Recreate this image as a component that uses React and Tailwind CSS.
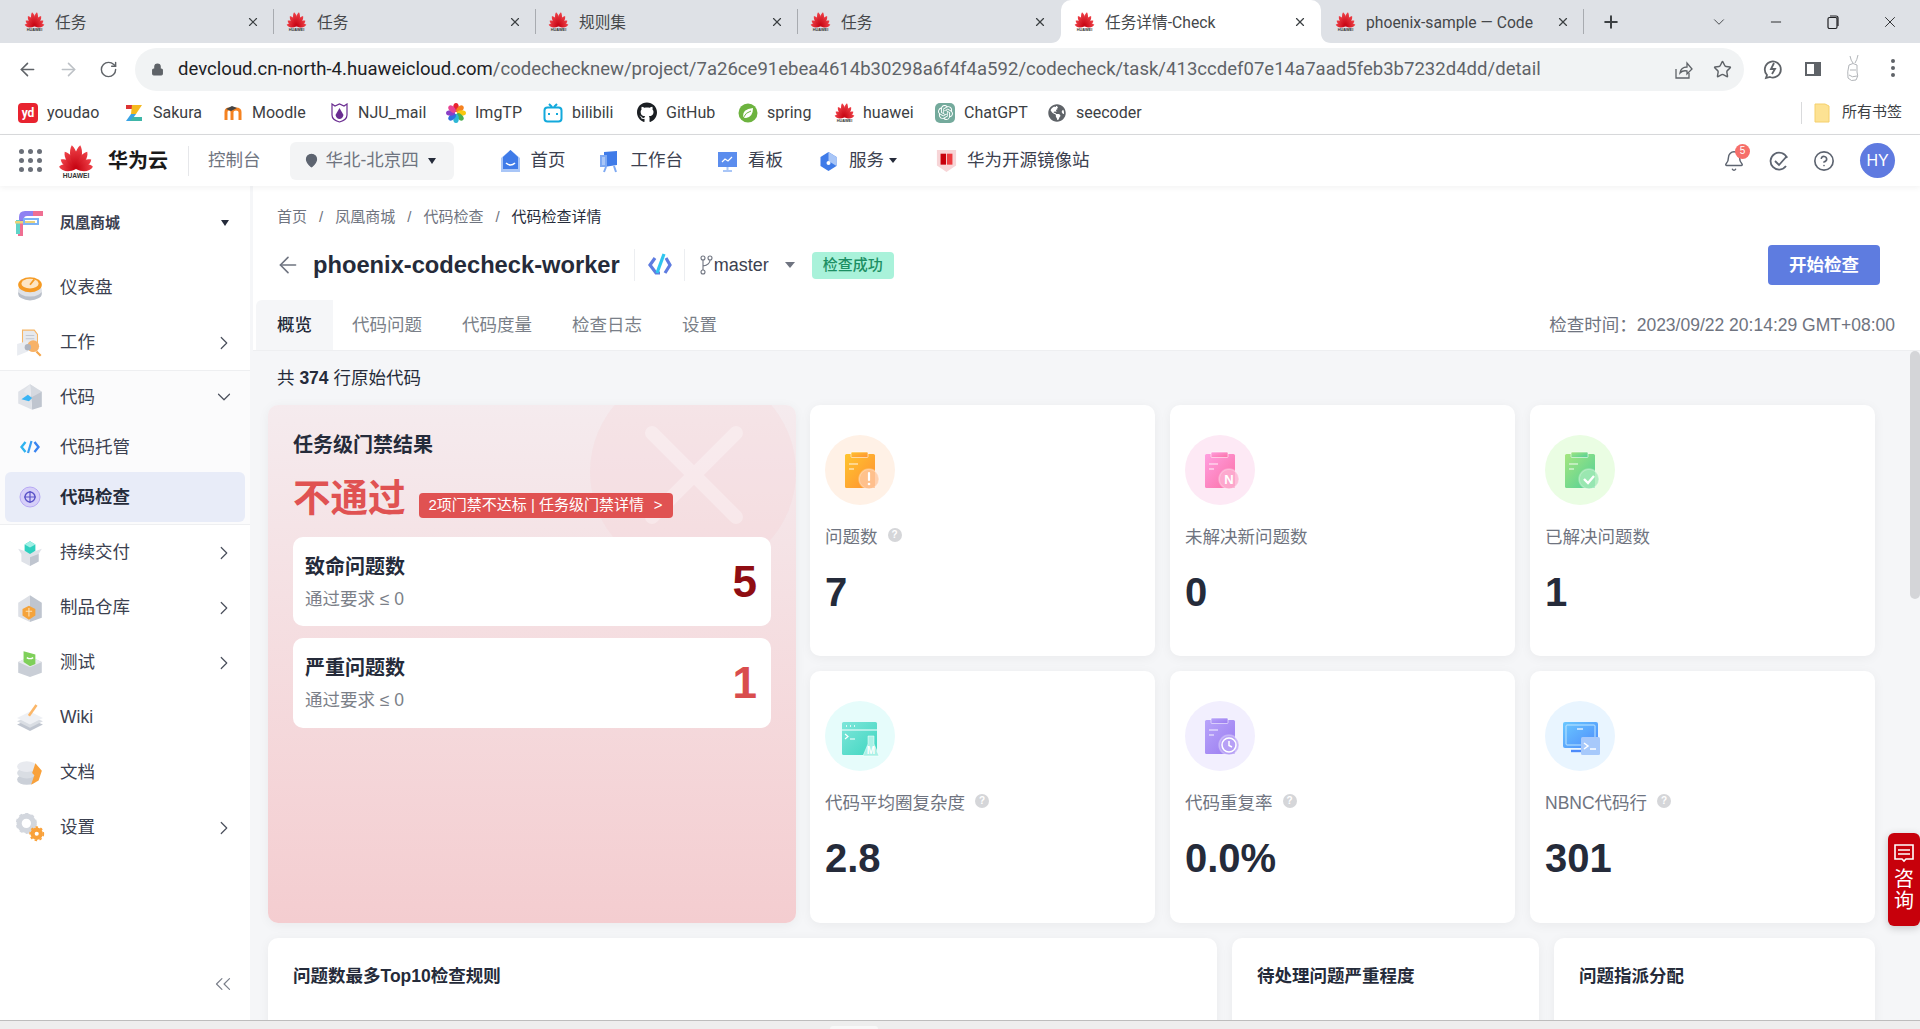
import React from "react";
import { ArrowLeft, ArrowRight, RotateCw, Lock, Star, ChevronDown, ChevronRight, Minus, X, Plus, Bell, CircleHelp, ChevronsLeft, MapPin } from "lucide-react";
import { FaGithub, FaGlobeAmericas } from "react-icons/fa";
import { SiOpenai } from "react-icons/si";

const Huawei = ({ size = 21, label = true }) => {
  const petals = [[-82, 19], [-58, 20], [-33, 23], [-10, 27], [10, 27], [33, 23], [58, 20], [82, 19]];
  return (
    <svg width={size} height={size} viewBox="0 0 40 40" className="shrink-0">
      <defs>
        <linearGradient id="hwg" x1="0" y1="0" x2="0" y2="1">
          <stop offset="0" stopColor="#f0434a" />
          <stop offset="1" stopColor="#c4000f" />
        </linearGradient>
      </defs>
      {petals.map(([a, l], i) => (
        <path key={i} transform={`translate(20 29) rotate(${a})`} d={`M0 0 C-5.500 ${-l * 0.4} -4.500 ${-l * 0.8} 0 ${-l} C4.500 ${-l * 0.8} 5.500 ${-l * 0.4} 0 0Z`} fill="url(#hwg)" />
      ))}
      {label && <text x="20" y="38.500" textAnchor="middle" fontSize="7.400" fontWeight="700" fontFamily="Liberation Sans" fill="#333">HUAWEI</text>}
    </svg>
  );
};

const ChromeTab = ({ title, narrow, active, sep = true, cls }) => (
  <div className={`relative flex h-[43px] items-center ${cls} ${active ? "rounded-t-[10px] bg-white" : ""}`}>
    <Huawei />
    <span className={`ml-[10px] translate-y-[1px] overflow-hidden whitespace-nowrap text-[15.700px] text-[#45474a] ${narrow ? "w-[178px]" : "w-[190px]"}`}>{title}</span>
    <X size={14} strokeWidth={2} className="absolute right-[14px] top-[15px] text-[#3c4043]" />
    {sep && <span className="absolute right-0 top-[9px] h-[25px] w-px bg-[#a8abb0]" />}
    {active && (
      <>
        <svg width="10" height="10" viewBox="0 0 10 10" className="absolute -left-[10px] bottom-0"><path d="M10 0V10H0C6 10 10 6 10 0Z" fill="#fff" /></svg>
        <svg width="10" height="10" viewBox="0 0 10 10" className="absolute -right-[10px] bottom-0"><path d="M0 0V10H10C4 10 0 6 0 0Z" fill="#fff" /></svg>
      </>
    )}
  </div>
);

const Bm = ({ icon, text, w }) => (
  <div className="flex items-center gap-[9px]">
    <span className="flex h-[20px] w-[20px] items-center justify-center">{icon}</span>
    <span className={`whitespace-nowrap text-[16px] text-[#3c4043] ${w}`}>{text}</span>
  </div>
);

const Q = () => (
  <span className="ml-[10px] flex h-[14px] w-[14px] -translate-y-[2px] items-center justify-center rounded-full bg-[#d5d6d9] text-[10px] font-bold leading-none text-white">?</span>
);

const Clip = ({ id, from, to, children, badge }) => (
  <svg width="70" height="70" viewBox="0 0 70 70">
    <defs>
      <linearGradient id={id} x1="0" y1="0" x2="1" y2="1">
        <stop offset="0" stopColor={from} />
        <stop offset="1" stopColor={to} />
      </linearGradient>
    </defs>
    <rect x="20" y="19" width="30" height="34" rx="1.500" fill={`url(#${id})`} />
    <rect x="26" y="17" width="17" height="5.500" rx="1" fill={`url(#${id})`} stroke="#fff" strokeOpacity=".55" strokeWidth="1" />
    <path d="M24 29h9M24 34h5" stroke="#fff" strokeWidth="1.200" strokeOpacity=".9" />
    <circle cx="44" cy="44" r="10" fill={badge} fillOpacity=".8" stroke="#fff" strokeOpacity=".3" strokeWidth="1.500" />
    {children}
  </svg>
);

const stats = [
  { label: "问题数", q: true, val: "7", bg: "bg-[#fff1e6]", icon: <Clip id="s1" from="#ffc52e" to="#ff8f33" badge="#ffc9a3"><path d="M44 38v7" stroke="#fff" strokeWidth="2.200" strokeLinecap="round" /><circle cx="44" cy="49" r="1.300" fill="#fff" /></Clip> },
  { label: "未解决新问题数", val: "0", bg: "bg-[#fde9f5]", icon: <Clip id="s2" from="#ff9fe0" to="#fb6fa5" badge="#fdb3d3"><text x="44" y="49" textAnchor="middle" fontSize="13" fontWeight="700" fontFamily="Liberation Sans" fill="#fff">N</text></Clip> },
  { label: "已解决问题数", val: "1", bg: "bg-[#eafde3]", icon: <Clip id="s3" from="#a5e67f" to="#4fcf98" badge="#a6ebb9"><path d="M39 44l4 4 6-7" stroke="#fff" strokeWidth="2.400" fill="none" /></Clip> },
  { label: "代码平均圈复杂度", q: true, val: "2.8", bg: "bg-[#e6fcfb]", icon: (
    <svg width="70" height="70" viewBox="0 0 70 70">
      <defs><linearGradient id="s4" x1="0" y1="0" x2="1" y2="1"><stop offset="0" stopColor="#7fe6da" /><stop offset="1" stopColor="#3ed6c0" /></linearGradient></defs>
      <rect x="17" y="21" width="35" height="33" rx="1.500" fill="url(#s4)" />
      <path d="M17 29h35" stroke="#fff" strokeWidth="1" />
      <path d="M21 25h1M25 25h1M29 25h1" stroke="#fff" strokeWidth="1.600" />
      <path d="M20 33l3 2.500-3 2.500M25 38h5" stroke="#fff" strokeWidth="1.200" fill="none" />
      <path d="M38 55l5-12v-8h6v8l5 12z" fill="#a9f0e5" stroke="#fff" strokeOpacity=".5" />
      <text x="46" y="53" textAnchor="middle" fontSize="10" fontWeight="700" fontFamily="Liberation Sans" fill="#fff">M</text>
    </svg>
  ) },
  { label: "代码重复率", q: true, val: "0.0%", bg: "bg-[#f2effe]", icon: <Clip id="s5" from="#b8a4fa" to="#9a7bf0" badge="#bba6f6"><circle cx="44" cy="44" r="7" fill="none" stroke="#fff" strokeWidth="1.500" /><path d="M44 40v4.500l3 1.500" stroke="#fff" strokeWidth="1.500" fill="none" /></Clip> },
  { label: "NBNC代码行", q: true, val: "301", bg: "bg-[#e9f5ff]", icon: (
    <svg width="70" height="70" viewBox="0 0 70 70">
      <defs><linearGradient id="s6" x1="0" y1="0" x2="1" y2="1"><stop offset="0" stopColor="#6ac7ff" /><stop offset="1" stopColor="#4d8bfb" /></linearGradient></defs>
      <rect x="18" y="21" width="35" height="26" rx="2" fill="url(#s6)" />
      <rect x="21" y="24" width="29" height="20" rx="1" fill="none" stroke="#bde6ff" strokeWidth="1" />
      <path d="M32 28h6" stroke="#fff" strokeWidth="1.200" />
      <path d="M26 50h16" stroke="#4d8bfb" strokeWidth="2.400" />
      <rect x="36" y="36" width="19" height="18" rx="1.500" fill="#a7c9fb" />
      <path d="M39 42l4 3-4 3M45 48h6" stroke="#fff" strokeWidth="1.500" fill="none" />
    </svg>
  ) },
];

const Side = {
  dash: <svg width="28" height="28" viewBox="0 0 26 26"><ellipse cx="13" cy="18" rx="11" ry="6.500" fill="#b9bfc9" /><ellipse cx="13" cy="15" rx="11" ry="6" fill="#dfe2e7" /><ellipse cx="13" cy="10" rx="11" ry="7" fill="#f59a23" /><ellipse cx="13" cy="9" rx="8" ry="4.500" fill="#fde6c4" /><path d="M13 10l4-5" stroke="#f59a23" strokeWidth="1.600" /></svg>,
  work: <svg width="28" height="30" viewBox="0 0 26 28"><path d="M6 2h11l3 4v12H6z" fill="#e6e9ee" stroke="#f5b567" /><path d="M9 7h8M9 10h8" stroke="#c3c8d1" /><path d="M1 15l10-3v10l-10 4z" fill="#e9ecf1" /><circle cx="16" cy="17" r="5.500" fill="#f7b267" /><circle cx="11" cy="18" r="3" fill="#aeb4bf" /><path d="M19 22l4 4" stroke="#f5a54a" strokeWidth="2" /></svg>,
  code: <svg width="28" height="30" viewBox="0 0 26 28"><path d="M13 2L24 9v14l-9 3z" fill="#bfc5cf" /><path d="M13 2L2 9v11l13 6z" fill="#dfe2e8" /><path d="M13 2L24 9l-9 5-8-5z" fill="#eceef2" opacity=".5" /><path d="M5 16l6-4 4 3-3 3z" fill="#39b4f5" /></svg>,
  repo: <svg width="20" height="14" viewBox="0 0 20 14"><path d="M5.500 2L1.500 7l4 5" stroke="#2fb4ef" strokeWidth="2.400" fill="none" /><path d="M14.500 2l4 5-4 5" stroke="#3a84f0" strokeWidth="2.400" fill="none" /><path d="M11.500 1L8 13" stroke="#3a9df0" strokeWidth="2.200" /></svg>,
  check: <svg width="22" height="22" viewBox="0 0 22 22"><circle cx="11" cy="11" r="10" fill="#d6cff8" stroke="#b7a9f4" /><circle cx="11" cy="11" r="5" fill="none" stroke="#5a53c8" strokeWidth="1.400" /><path d="M11 5v12M5 11h12" stroke="#5a53c8" strokeWidth="1.200" /></svg>,
  cd: <svg width="28" height="28" viewBox="0 0 26 26"><path d="M13 13l11-4-3 5v7l-8 4-8-4v-7L2 9z" fill="#dfe2e8" /><path d="M13 17v8l8-4v-7z" fill="#bfc5cf" /><path d="M8 5l5-3 5 3v6l-5 3-5-3z" fill="#2ed0bf" /><path d="M8 5l5 3 5-3-5-3z" fill="#9ff0e5" /></svg>,
  art: <svg width="28" height="30" viewBox="0 0 26 28"><path d="M13 2L24 9v14l-11 4z" fill="#bfc5cf" /><path d="M13 2L2 9v13l11 5z" fill="#dde0e6" /><path d="M6 15l6-3 6 3v6l-6 4-6-4z" fill="#f5a33b" /><path d="M9 17h6M12 14v8" stroke="#fde3b8" /></svg>,
  test: <svg width="28" height="30" viewBox="0 0 26 28"><path d="M2 13l11-5 11 5v10l-11 4-11-4z" fill="#c9ced6" /><path d="M2 13l11 5 11-5-11-5z" fill="#e9ebef" /><path d="M7 3l11 3v9l-5 2-6-4z" fill="#7fd05a" /><path d="M10 9q3 2 6 0" stroke="#fff" strokeWidth="1.200" fill="none" /></svg>,
  wiki: <svg width="28" height="28" viewBox="0 0 26 26"><path d="M1 19l12 6 12-6-12-5z" fill="#bfc5cf" /><path d="M1 16l12 6 12-6-12-5z" fill="#d9dde3" /><path d="M1 13l12 6 12-6-12-6z" fill="#eef0f4" /><path d="M12 11L19 1" stroke="#fbb668" strokeWidth="2.400" /></svg>,
  doc: <svg width="28" height="28" viewBox="0 0 26 26"><ellipse cx="10" cy="19" rx="9" ry="5" fill="#cbd0d8" /><ellipse cx="10" cy="13" rx="9" ry="5" fill="#d9dde3" /><ellipse cx="10" cy="7" rx="9" ry="5" fill="#e8eaef" /><path d="M18 4l6 7-3 9-7 4 3-9-2-2z" fill="#f9a13a" /></svg>,
  set: <svg width="29" height="29" viewBox="0 0 28 28"><circle cx="10" cy="10" r="7" fill="none" stroke="#d3d7de" strokeWidth="5" /><circle cx="10" cy="10" r="9.200" fill="none" stroke="#d3d7de" strokeWidth="2" strokeDasharray="3 3" /><circle cx="20" cy="20" r="4" fill="none" stroke="#f9a13a" strokeWidth="4" /><circle cx="20" cy="20" r="6.400" fill="none" stroke="#f9a13a" strokeWidth="1.600" strokeDasharray="2.400 2.400" /></svg>,
};

const Row = ({ icon, text, chev, h = "h-[55px]", open }) => (
  <div className={`flex items-center pr-[15px] ${h}`}>
    <span className="flex w-[60px] justify-center"><span className="flex w-[30px] justify-center">{icon}</span></span>
    <span className="text-[17.500px] text-[#3c4150]">{text}</span>
    {chev && (open
      ? <ChevronDown size={22} strokeWidth={1.300} className="ml-auto text-[#4a4f5c]" />
      : <ChevronRight size={22} strokeWidth={1.300} className="ml-auto text-[#4a4f5c]" />)}
  </div>
);

const Card = ({ title, w }) => (
  <div className={`h-[200px] rounded-[10px] bg-white pl-[25px] pt-[24px] shadow-[0_2px_12px_rgba(0,0,0,0.05)] ${w}`}>
    <div className="text-[17.500px] font-bold leading-[28px] text-[#252b3a]">{title}</div>
  </div>
);

const Gate = ({ title, val, color, cls }) => (
  <div className={`flex items-center justify-between rounded-[10px] bg-white pl-[12px] pr-[14px] ${cls}`}>
    <div>
      <div className="text-[20px] font-bold leading-[28px] text-[#252b3a]">{title}</div>
      <div className="mt-[6px] text-[17.500px] leading-[24px] text-[#7b7f88]">通过要求 ≤ 0</div>
    </div>
    <div className={`text-[44px] font-bold leading-none ${color}`}>{val}</div>
  </div>
);

const NavIcon = {
  home: <svg width="21" height="24" viewBox="0 0 21 24"><path d="M10.500 1L20 9v14H1V9z" fill="#a9c6f7" /><path d="M10.500 1L3 8v12h15V8z" fill="#3f7be8" /><path d="M6 14q4.500 4 9 0" stroke="#fff" strokeWidth="1.600" fill="none" /></svg>,
  board: <svg width="21" height="24" viewBox="0 0 21 24"><path d="M4 3l13-1v14l-13 2z" fill="#3f7be8" /><path d="M1 7h5v10H1zM6 18l-2 5M14 17l2 6" stroke="#7ea9f2" strokeWidth="2" fill="#a9c6f7" /></svg>,
  kanban: <svg width="21" height="24" viewBox="0 0 21 24"><rect x="1" y="3" width="19" height="15" fill="#5b8dee" /><path d="M5 13l3-3 3 2 4-4" stroke="#fff" strokeWidth="1.200" fill="none" /><path d="M10.500 18v3M6 22h9" stroke="#a9c6f7" strokeWidth="2" /></svg>,
  serv: <svg width="19" height="24" viewBox="0 0 19 24"><path d="M9.500 3l8 5v9l-8 5-8-5V8z" fill="#3f7be8" /><path d="M9.500 3l8 5v9l-8-5z" fill="#a9c6f7" /><circle cx="9.500" cy="14" r="2" fill="#fff" /></svg>,
  mirror: <svg width="23" height="26" viewBox="0 0 23 26"><path d="M1 1h21v17l-10.500 7L1 18z" fill="#f7d5d7" /><path d="M5 5h6v12H5z" fill="#c7000b" /><path d="M12 5h6v12h-6z" fill="#ee3b40" /></svg>,
};

const Nav = ({ icon, text, cls, caret }) => (
  <div className={`flex items-center ${cls}`}>
    <span className="flex w-[21px] justify-center">{icon}</span>
    <span className="ml-[10px] whitespace-nowrap text-[17.500px] text-[#3c4150]">{text}</span>
    {caret && <span className="ml-[5px] h-0 w-0 border-x-[4px] border-t-[5px] border-x-transparent border-t-[#252b3a]" />}
  </div>
);

export default function App() {
  return (
    <div className="flex h-[1029px] w-[1920px] flex-col overflow-hidden bg-white font-['Liberation_Sans','Noto_Sans_CJK_SC',sans-serif]">
      {/* tab strip */}
      <div className="flex h-[43px] shrink-0 items-center bg-[#dee1e6] pl-[12px] font-[Roboto,'Noto_Sans_CJK_SC',sans-serif]">
        <ChromeTab title="任务" cls="w-[262px] pl-[12px]" />
        <ChromeTab title="任务" cls="w-[262px] pl-[12px]" />
        <ChromeTab title="规则集" cls="w-[262px] pl-[12px]" />
        <ChromeTab title="任务" cls="w-[263px] pl-[12px]" sep={false} />
        <ChromeTab title="任务详情-Check" cls="w-[260px] pl-[13px]" active sep={false} />
        <ChromeTab title="phoenix-sample — Code" cls="w-[263px] pl-[14px]" narrow />
        <Plus size={20} strokeWidth={2.400} className="ml-[17px] text-[#3c4043]" />
        <ChevronDown size={18} strokeWidth={1.200} className="ml-[89px] text-[#3c4043]" />
        <Minus size={16} strokeWidth={1.400} className="ml-[40px] text-[#202124]" />
        <svg width="14" height="16" viewBox="0 0 14 16" className="ml-[42px]"><rect x="2" y="3.500" width="9" height="11" rx="1.500" fill="none" stroke="#202124" strokeWidth="1.200" /><path d="M4 2h6q2 0 2 2v8" fill="none" stroke="#202124" strokeWidth="1.200" /></svg>
        <X size={18} strokeWidth={1.200} className="ml-[41px] text-[#202124]" />
      </div>
      {/* toolbar */}
      <div className="flex h-[48px] shrink-0 items-start bg-white pl-[17px] pt-[5px] font-[Roboto,'Noto_Sans_CJK_SC',sans-serif]">
        <ArrowLeft size={21} strokeWidth={1.800} className="mt-[11px] text-[#5f6368]" />
        <ArrowRight size={21} strokeWidth={1.800} className="ml-[20px] mt-[11px] text-[#bdc1c6]" />
        <RotateCw size={19} strokeWidth={1.800} className="ml-[20px] mt-[12px] text-[#5f6368]" />
        <div className="ml-[17px] flex h-[43px] w-[1609px] items-center rounded-full bg-[#f1f3f4] pl-[16px] pr-[12px]">
          <Lock size={13} fill="#5f6368" strokeWidth={2} className="text-[#5f6368]" />
          <span className="ml-[14px] whitespace-nowrap text-[18.500px] tracking-[0.03px] text-[#5f6368]">
            <span className="text-[#202124]">devcloud.cn-north-4.huaweicloud.com</span>/codechecknew/project/7a26ce91ebea4614b30298a6f4f4a592/codecheck/task/413ccdef07e14a7aad5feb3b7232d4dd/detail
          </span>
          <svg width="20" height="20" viewBox="0 0 20 20" className="ml-auto" fill="none" stroke="#5f6368" strokeWidth="1.300"><path d="M3 9v9h13v-5" /><path d="M7 13q1-6 7-6V3l5 6-5 5v-3q-4-1-7 2z" /></svg>
          <Star size={19} strokeWidth={1.800} className="ml-[20px] text-[#5f6368]" />
        </div>
        <svg width="20" height="22" viewBox="0 0 20 22" className="ml-[19px] mt-[10px]" fill="none" stroke="#5f6368" strokeWidth="1.800"><path d="M4 17a8 8 0 1 1 3 2l-4 1z" /><path d="M11 5l-3 6h4l-3 5" /></svg>
        <svg width="18" height="18" viewBox="0 0 18 18" className="ml-[21px] mt-[12px]"><rect x="1" y="2" width="16" height="14" fill="#5f6368" /><rect x="3" y="4" width="7" height="10" fill="#fff" /></svg>
        <svg width="18" height="30" viewBox="0 0 18 30" className="ml-[22px] mt-[6px]" fill="none" stroke="#a8abb0" strokeWidth=".9"><path d="M6 2q1 5 3 7M14 1q-1 5-3 8M5 11q4-3 8 0v7q2 4-1 8q-5 2-8-2q-1-6 1-13zM6 16h6M5 21q3 3 8 1" /></svg>
        <div className="ml-[29px] mt-[11px] flex flex-col gap-[3px]">
          <span className="h-[4px] w-[4px] rounded-full bg-[#5f6368]" /><span className="h-[4px] w-[4px] rounded-full bg-[#5f6368]" /><span className="h-[4px] w-[4px] rounded-full bg-[#5f6368]" />
        </div>
      </div>
      {/* bookmarks */}
      <div className="flex h-[44px] shrink-0 items-center gap-[22px] border-b border-[#d9dadc] pl-[18px] font-[Roboto,'Noto_Sans_CJK_SC',sans-serif]">
        <Bm w="w-[55px]" text="youdao" icon={<span className="flex h-[20px] w-[20px] items-center justify-center rounded-[4px] bg-[#e8232f] text-[12px] font-bold leading-none text-white">yd</span>} />
        <Bm w="w-[48px]" text="Sakura" icon={<svg width="20" height="20" viewBox="0 0 20 20"><path d="M2 2h6v4H2z" fill="#d33" /><path d="M8 2h10L12 11H7z" fill="#f5b91f" /><path d="M7 11h5l-5 7H2z" fill="#3aa3e3" /><path d="M9 14h9v4H6z" fill="#3fb6a8" /></svg>} />
        <Bm w="w-[55px]" text="Moodle" icon={<svg width="20" height="20" viewBox="0 0 20 20"><path d="M3 17V9q0-3 3-3t3 3v8M9 9q0-3 4-3t4 3v8" fill="none" stroke="#f58220" strokeWidth="3" /><path d="M3 6l6-3 5 2-6 3z" fill="#444" /></svg>} />
        <Bm w="w-[66px]" text="NJU_mail" icon={<svg width="17" height="20" viewBox="0 0 17 20"><path d="M1 1l3 2 4.500-2 4.500 2 3-2v11q0 5-7.500 7Q1 17 1 12z" fill="#fff" stroke="#6a2c91" strokeWidth="1.200" /><path d="M8.500 5l4 7q-1 4-4 4t-4-4z" fill="#6a2c91" /></svg>} />
        <Bm w="w-[46px]" text="ImgTP" icon={<svg width="20" height="20" viewBox="-10 -10 20 20">{["#e8232f", "#f58220", "#f9c80e", "#4caf50", "#2db7d5", "#2f6fde", "#8a3fc7", "#e84393"].map((c, i) => <ellipse key={i} transform={`rotate(${i * 45}) translate(0 -5.500)`} rx="2.800" ry="4.500" fill={c} />)}</svg>} />
        <Bm w="w-[43px]" text="bilibili" icon={<svg width="20" height="20" viewBox="0 0 20 20"><rect x="1.500" y="4.500" width="17" height="14" rx="3" fill="none" stroke="#13a9dc" strokeWidth="2" /><path d="M6 1l3 3M14 1l-3 3" stroke="#13a9dc" strokeWidth="2" /><path d="M6 10v2M14 10v2" stroke="#13a9dc" strokeWidth="2" /></svg>} />
        <Bm w="w-[50px]" text="GitHub" icon={<FaGithub size={21} color="#1b1f23" />} />
        <Bm w="w-[45px]" text="spring" icon={<svg width="20" height="20" viewBox="0 0 20 20"><circle cx="10" cy="10" r="9.500" fill="#6db33f" /><path d="M5 14q-1-8 10-9 0 9-7 10-2 0-3-1z" fill="#fff" /><path d="M5 15q3-6 8-7" stroke="#6db33f" fill="none" /></svg>} />
        <Bm w="w-[50px]" text="huawei" icon={<Huawei size={21} />} />
        <Bm w="w-[61px]" text="ChatGPT" icon={<span className="flex h-[20px] w-[20px] items-center justify-center rounded-[5px] bg-[#74aa9c]"><SiOpenai size={15} color="#fff" /></span>} />
        <Bm w="w-[66px]" text="seecoder" icon={<FaGlobeAmericas size={18} color="#5f6368" />} />
        <span className="ml-[637px] h-[22px] w-px bg-[#d9dadc]" />
        <svg width="16" height="20" viewBox="0 0 16 20" className="-ml-[10px]"><path d="M1 1h10l4 2v16H1z" fill="#fde293" stroke="#f5d06c" /></svg>
        <span className="-ml-[10px] whitespace-nowrap text-[15px] text-[#3c4043]">所有书签</span>
      </div>
      {/* app header */}
      <div className="relative z-10 flex h-[51px] shrink-0 items-center bg-white shadow-[0_2px_6px_rgba(0,0,0,0.05)]">
        <div className="ml-[19px] grid grid-cols-3 gap-[4px]">
          {[0, 1, 2, 3, 4, 5, 6, 7, 8].map((i) => <span key={i} className="h-[5px] w-[5px] rounded-full bg-[#6a6f78]" />)}
        </div>
        <span className="ml-[16px]"><Huawei size={36} /></span>
        <span className="ml-[14px] text-[20px] font-bold text-[#1a1a1a]">华为云</span>
        <span className="ml-[20px] h-[30px] w-px bg-[#e6e7ea]" />
        <span className="ml-[19px] text-[17.500px] text-[#6f7480]">控制台</span>
        <div className="ml-[29px] flex h-[38px] w-[164px] items-center rounded-[6px] bg-[#f3f4f5] pl-[14px]">
          <MapPin size={15} fill="#5d6470" strokeWidth={2} color="#5d6470" />
          <span className="ml-[7px] text-[17.500px] text-[#6f7480]">华北-北京四</span>
          <span className="ml-[9px] h-0 w-0 border-x-[4.500px] border-t-[6px] border-x-transparent border-t-[#252b3a]" />
        </div>
        <Nav icon={NavIcon.home} text="首页" cls="ml-[46px]" />
        <Nav icon={NavIcon.board} text="工作台" cls="ml-[34px]" />
        <Nav icon={NavIcon.kanban} text="看板" cls="ml-[34px]" />
        <Nav icon={NavIcon.serv} text="服务" cls="ml-[35px]" caret />
        <Nav icon={NavIcon.mirror} text="华为开源镜像站" cls="ml-[39px]" />
        <div className="relative ml-auto">
          <Bell size={22} strokeWidth={1.600} className="text-[#5d6470]" />
          <span className="absolute -right-[5px] -top-[6px] flex h-[15px] w-[15px] items-center justify-center rounded-full bg-[#f66f6a] text-[10px] leading-none text-white">5</span>
        </div>
        <svg width="22" height="22" viewBox="0 0 22 22" className="ml-[23px]" fill="none" stroke="#5d6470" strokeWidth="1.800"><path d="M19 8a8.500 8.500 0 1 0-1 8" /><path d="M7 11l4 4 8-9" /></svg>
        <CircleHelp size={22} strokeWidth={1.800} className="ml-[23px] text-[#5d6470]" />
        <span className="ml-[25px] mr-[25px] flex h-[35px] w-[35px] items-center justify-center rounded-full bg-[#5f7ae0] text-[16px] text-white">HY</span>
      </div>
      {/* main */}
      <div className="flex min-h-0 flex-1">
        <aside className="flex w-[250px] shrink-0 flex-col bg-white">
          <div className="flex h-[74px] items-center pr-[21px]">
            <svg width="30" height="30" viewBox="0 0 30 30" className="ml-[15px]">
              <rect x="3" y="12" width="5" height="16" fill="#ef6f92" /><path d="M4 15V9q0-6 6-6h18v5H12q-3 0-3 3v4z" fill="#7a6cf0" fillOpacity=".85" />
              <path d="M18 3h10v5H18z" fill="#ef6f92" /><rect x="1" y="12" width="4" height="14" fill="#60d3c8" /><rect x="0" y="13" width="20" height="2.500" fill="#e9d27a" /><path d="M9 11h14v5H9z" fill="none" stroke="#7cb3f5" strokeWidth="2" />
            </svg>
            <span className="ml-[15px] text-[15px] font-bold text-[#3c4150]">凤凰商城</span>
            <span className="ml-auto h-0 w-0 border-x-[4.500px] border-t-[6px] border-x-transparent border-t-[#252b3a]" />
          </div>
          <Row icon={Side.dash} text="仪表盘" />
          <Row icon={Side.work} text="工作" chev />
          <div className="border-y border-[#eeeff1] bg-[#fbfbfc] pb-[2px] pt-[1px]">
            <Row icon={Side.code} text="代码" chev open h="h-[50px]" />
            <Row icon={Side.repo} text="代码托管" h="h-[50px]" />
            <div className="mx-[5px] flex h-[50px] items-center rounded-[6px] bg-[#e8ecf8]">
              <span className="flex w-[50px] justify-center">{Side.check}</span>
              <span className="ml-[5px] text-[17.500px] font-bold text-[#252b3a]">代码检查</span>
            </div>
          </div>
          <Row icon={Side.cd} text="持续交付" chev />
          <Row icon={Side.art} text="制品仓库" chev />
          <Row icon={Side.test} text="测试" chev />
          <Row icon={Side.wiki} text="Wiki" />
          <Row icon={Side.doc} text="文档" />
          <Row icon={Side.set} text="设置" chev />
          <div className="mt-auto flex justify-end pb-[23px] pr-[14px]">
            <ChevronsLeft size={26} strokeWidth={1.100} className="text-[#7a7f8a]" />
          </div>
        </aside>
        <main className="relative flex min-w-0 flex-1 flex-col bg-[#f5f6f8] pl-[3px]">
          <div className="h-[114px] shrink-0 bg-white pl-[24px] pt-[21px]">
            <div className="flex h-[20px] items-center text-[15px] text-[#6f7480]">
              <span>首页</span><span className="mx-[12px]">/</span>
              <span>凤凰商城</span><span className="mx-[12px]">/</span>
              <span>代码检查</span><span className="mx-[12px]">/</span>
              <span className="text-[#252b3a]">代码检查详情</span>
            </div>
            <div className="mt-[18px] flex h-[40px] items-center">
              <ArrowLeft size={26} strokeWidth={1.500} className="-ml-[2px] text-[#6f7480]" />
              <span className="ml-[12px] translate-y-[1px] text-[23.700px] font-bold text-[#252b3a]">phoenix-codecheck-worker</span>
              <span className="ml-[14px] h-[32px] w-px bg-[#eceef1]" />
              <svg width="24" height="24" viewBox="0 0 24 24" className="ml-[13px]" fill="none" strokeWidth="3.200"><path d="M7 5L2 12l6 8h4" stroke="#5e7ce0" /><path d="M18 5l4 7-5 8" stroke="#5e7ce0" /><path d="M16 1L9 20" stroke="#2fc6ef" /></svg>
              <span className="ml-[12px] h-[32px] w-px bg-[#eceef1]" />
              <svg width="13" height="20" viewBox="0 0 13 20" className="ml-[15px]" fill="none" stroke="#6f7480" strokeWidth="1.100"><circle cx="3" cy="3" r="2" /><circle cx="10" cy="3" r="2" /><circle cx="3" cy="17" r="2" /><path d="M3 5v10M10 5q0 5-7 6" /></svg>
              <span className="ml-[1px] text-[18px] text-[#3c4150]">master</span>
              <span className="ml-[16px] h-0 w-0 border-x-[5px] border-t-[6px] border-x-transparent border-t-[#6f7480]" />
              <span className="ml-[17px] flex h-[27px] w-[82px] items-center justify-center rounded-[4px] bg-[#a9f2da] text-[15px] font-medium text-[#1c8f63]">检查成功</span>
              <button className="ml-auto mr-[40px] h-[40px] w-[112px] rounded-[4px] bg-[#5e7ce0] text-[17.500px] font-bold text-white">开始检查</button>
            </div>
          </div>
          <div className="flex h-[51px] shrink-0 items-start border-b border-[#eeeff1] bg-white pl-[3px]">
            <div className="flex h-[50px] w-[77px] items-center justify-center rounded-tl-[6px] bg-[#f5f6f8] text-[17.500px] font-medium text-[#252b3a]">概览</div>
            <div className="ml-[19px] flex h-[50px] items-center gap-[40px] text-[17.500px] text-[#7a7f88]">
              <span>代码问题</span><span>代码度量</span><span>检查日志</span><span>设置</span>
            </div>
            <div className="ml-auto mr-[25px] flex h-[50px] items-center text-[17.500px] text-[#6f7480]">检查时间：2023/09/22 20:14:29 GMT+08:00</div>
          </div>
          <div className="min-h-0 flex-1 overflow-hidden pl-[15px]">
            <div className="flex h-[54px] items-center pl-[9px] text-[17.500px] text-[#252b3a]">共&nbsp;<b>374</b>&nbsp;行原始代码</div>
            <div className="flex gap-[14px]">
              <div className="relative h-[518px] w-[528px] overflow-hidden rounded-[10px] bg-gradient-to-b from-[#f5ebee] to-[#f4cdd0] px-[25px] pt-[26px] shadow-[0_2px_12px_rgba(0,0,0,0.05)]">
                <div className="absolute left-[322px] top-[-36px] h-[206px] w-[206px] rounded-full bg-[#f3c9ce]/20" />
                <svg width="100" height="100" viewBox="0 0 100 100" className="absolute left-[376px] top-[20px]"><path d="M8 8L92 92M92 8L8 92" stroke="#fff" strokeOpacity=".3" strokeWidth="14" strokeLinecap="round" /></svg>
                <div className="relative text-[20px] font-bold leading-[28px] text-[#252b3a]">任务级门禁结果</div>
                <div className="relative mt-[14px] flex h-[50px] items-end">
                  <span className="self-center text-[37.500px] font-bold leading-[50px] text-[#e05252]">不通过</span>
                  <span className="mb-[5px] ml-[13px] flex h-[25px] w-[254px] items-center justify-between whitespace-nowrap rounded-[4px] bg-[#e05252] pl-[10px] pr-[10px] text-[15px] text-white"><span>2项门禁不达标 | 任务级门禁详情</span><span>&gt;</span></span>
                </div>
                <Gate title="致命问题数" val="5" color="text-[#8f0d12]" cls="relative mt-[14px] h-[89px]" />
                <Gate title="严重问题数" val="1" color="text-[#d94d4d]" cls="relative mt-[12px] h-[90px]" />
              </div>
              <div className="grid w-[1065px] grid-cols-3 grid-rows-[251px_252px] gap-[15px]">
                {stats.map((s) => (
                  <div key={s.label} className="rounded-[10px] bg-white pl-[15px] pt-[30px] shadow-[0_2px_12px_rgba(0,0,0,0.05)]">
                    <div className={`h-[70px] w-[70px] rounded-full ${s.bg}`}>{s.icon}</div>
                    <div className="mt-[18px] flex h-[28px] items-center text-[17.500px] text-[#6f7480]">{s.label}{s.q && <Q />}</div>
                    <div className="mt-[16px] text-[40px] font-bold leading-[50px] text-[#252b3a]">{s.val}</div>
                  </div>
                ))}
              </div>
            </div>
            <div className="mt-[15px] flex gap-[15px]">
              <Card title="问题数最多Top10检查规则" w="w-[949px]" />
              <Card title="待处理问题严重程度" w="w-[307px]" />
              <Card title="问题指派分配" w="w-[321px]" />
            </div>
          </div>
          <div className="absolute right-0 top-[165px] h-[248px] w-[10px] rounded-full bg-[#d4d5d8]" />
          <div className="absolute right-0 top-[647px] flex h-[93px] w-[32px] flex-col items-center rounded-[6px] bg-[#c7000b] pt-[10px] text-[20px] leading-[22px] text-white shadow-[0_2px_8px_rgba(0,0,0,0.2)]">
            <svg width="22" height="20" viewBox="0 0 22 20" fill="none" stroke="#fff" strokeWidth="1.600"><path d="M2 2h18v14h-7l-2 2-2-2H2z" /><path d="M5 7h12M5 11h12" /></svg>
            <span className="mt-[5px]">咨</span>
            <span>询</span>
          </div>
        </main>
      </div>
      {/* bottom bar */}
      <div className="flex h-[9px] shrink-0 items-end border-t border-[#bdbdbd] bg-[#eeeeee] pl-[830px]">
        <span className="h-[3px] w-[48px] rounded-t-[3px] bg-[#f8f8f8]" />
      </div>
    </div>
  );
}
